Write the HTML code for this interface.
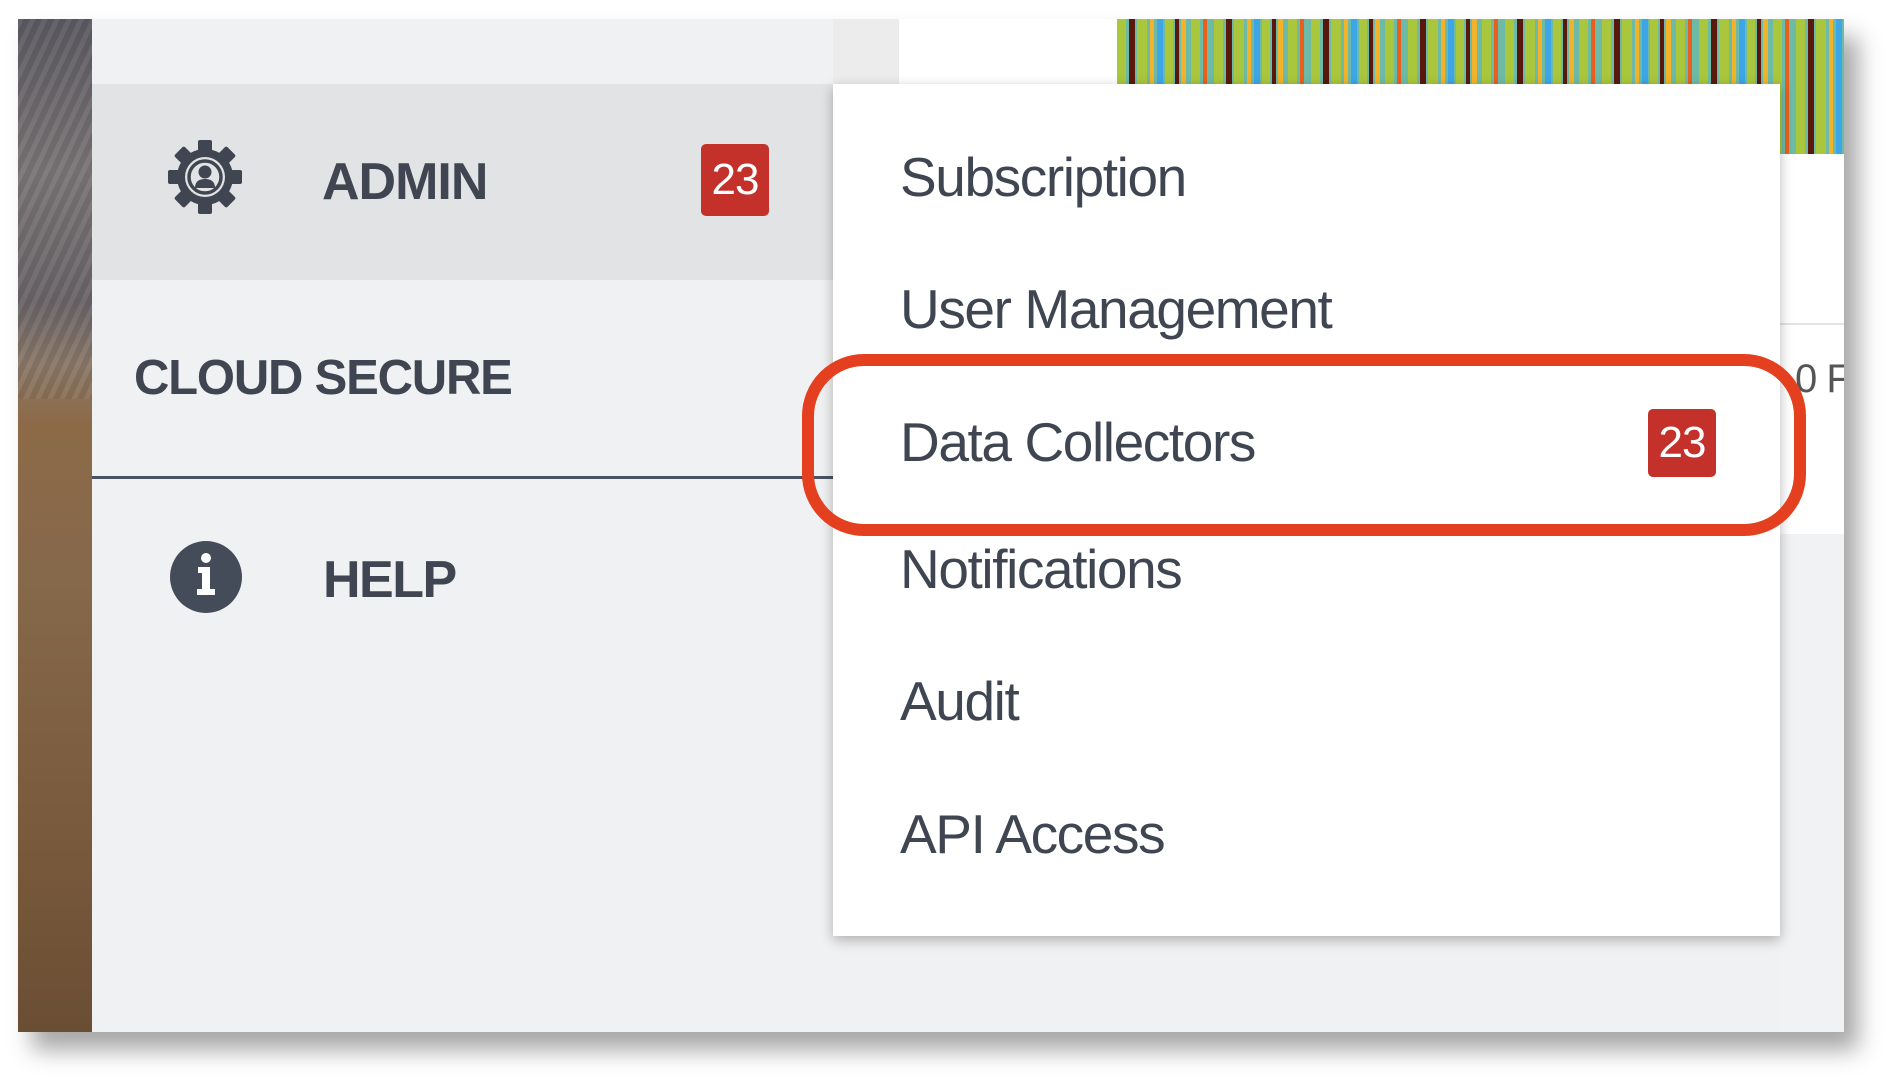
<!DOCTYPE html>
<html><head><meta charset="utf-8"><style>
html,body{margin:0;padding:0;width:1892px;height:1082px;background:#fff;overflow:hidden;position:relative;font-family:"Liberation Sans",sans-serif}
.abs{position:absolute}
#shot{left:18px;top:19px;width:1826px;height:1013px;box-shadow:14px 18px 22px rgba(0,0,0,.35);background:#f0f1f2;overflow:hidden}
.side{color:#3f4652;font-weight:bold;font-size:52px;letter-spacing:-1px;line-height:1;white-space:nowrap}
.mi{color:#3f4652;font-size:55px;letter-spacing:-1.4px;line-height:1;white-space:nowrap}
.badge{background:#c3312a;color:#fff;border-radius:5px;font-size:44px;text-align:center;line-height:72px;letter-spacing:-1px}
</style></head><body>
<div id="shot" class="abs">
  <div class="abs" style="left:0;top:0;width:74px;height:1013px;background:linear-gradient(180deg,#5c5a62 0%,#7a7576 15%,#6a6468 28%,#8a7868 34%,#8c6a48 40%,#86684a 55%,#7a5a3c 80%,#6a4e34 100%)"></div>
  <div class="abs" style="left:0;top:0;width:74px;height:380px;background:repeating-linear-gradient(115deg,rgba(255,255,255,.05) 0 5px,rgba(0,0,0,.06) 5px 11px)"></div>
  <div class="abs" style="left:815px;top:0;width:66px;height:65px;background:#ececed"></div>
  <div class="abs" style="left:881px;top:0;width:945px;height:65px;background:#fff"></div>
  <div class="abs" style="left:1762px;top:65px;width:64px;height:450px;background:#fff"></div>
  <div class="abs" style="left:1762px;top:515px;width:64px;height:498px;background:#f1f2f3"></div>
  <div class="abs" style="left:1762px;top:304px;width:64px;height:2px;background:#e3e4e6"></div>
  <div class="abs" style="left:1777px;top:338px;font-size:40px;color:#555;letter-spacing:-1px;white-space:nowrap">0 F</div>
  <svg class="abs" style="left:1099px;top:0" width="727" height="135">
    <defs>
      <pattern id="p" width="97" height="135" patternUnits="userSpaceOnUse">
        <rect width="97" height="135" fill="#6dbaa6"/>
        <rect x="0" width="9" height="135" fill="#a9c63c"/>
        <rect x="12" width="6" height="135" fill="#5a180c"/>
        <rect x="20" width="10" height="135" fill="#a9c63c"/>
        <rect x="33" width="4" height="135" fill="#f2b32a"/>
        <rect x="40" width="6" height="135" fill="#3fa6e6"/>
        <rect x="48" width="8" height="135" fill="#a9c63c"/>
        <rect x="58" width="4" height="135" fill="#5a180c"/>
        <rect x="64" width="5" height="135" fill="#f2b32a"/>
        <rect x="74" width="9" height="135" fill="#a9c63c"/>
        <rect x="86" width="4" height="135" fill="#e8601e"/>
      </pattern>
    </defs>
    <rect width="727" height="65" fill="url(#p)"/>
    <rect x="663" y="0" width="64" height="135" fill="url(#p)"/>
  </svg>
  <div class="abs" style="left:74px;top:65px;width:741px;height:196px;background:#e2e3e5"></div>
  <svg class="abs" style="left:149px;top:120px" width="76" height="76" viewBox="-38 -38 76 76">
    <g fill="#3f4652">
      <circle r="28"/>
      <g id="t"><rect x="-7" y="-37" width="14" height="14" rx="2"/></g>
      <use href="#t" transform="rotate(45)"/><use href="#t" transform="rotate(90)"/><use href="#t" transform="rotate(135)"/>
      <use href="#t" transform="rotate(180)"/><use href="#t" transform="rotate(225)"/><use href="#t" transform="rotate(270)"/><use href="#t" transform="rotate(315)"/>
    </g>
    <circle r="20" fill="#e2e3e5"/>
    <circle r="16" fill="none" stroke="#3f4652" stroke-width="3.5"/>
    <circle cy="-5" r="6.5" fill="#3f4652"/>
    <path d="M-10 11 Q-10 2 0 2 Q10 2 10 11 Z" fill="#3f4652"/>
  </svg>
  <div class="abs side" style="left:304px;top:137px">ADMIN</div>
  <div class="abs badge" style="left:683px;top:125px;width:68px;height:72px">23</div>
  <div class="abs side" style="left:116px;top:335px;font-size:49px;letter-spacing:-1.2px">CLOUD SECURE</div>
  <div class="abs" style="left:74px;top:457px;width:741px;height:3px;background:#4a5364"></div>
  <svg class="abs" style="left:151px;top:521px" width="74" height="74" viewBox="0 0 74 74">
    <circle cx="37" cy="37" r="36" fill="#454c59"/>
    <circle cx="37" cy="18" r="5" fill="#fff"/>
    <path d="M29 27h12v22h5v6H28v-6h5V33h-4z" fill="#fff"/>
  </svg>
  <div class="abs side" style="left:305px;top:535px;letter-spacing:-1.5px">HELP</div>
  <div class="abs" style="left:815px;top:65px;width:947px;height:852px;background:#fff;box-shadow:0 4px 12px rgba(0,0,0,.28)"></div>
  <div class="abs mi" style="left:882px;top:131px">Subscription</div>
  <div class="abs mi" style="left:882px;top:263px">User Management</div>
  <div class="abs mi" style="left:882px;top:396px">Data Collectors</div>
  <div class="abs badge" style="left:1630px;top:390px;width:68px;height:68px;line-height:68px">23</div>
  <div class="abs mi" style="left:882px;top:523px">Notifications</div>
  <div class="abs mi" style="left:882px;top:655px">Audit</div>
  <div class="abs mi" style="left:882px;top:788px">API Access</div>
  <div class="abs" style="left:784px;top:335px;width:980px;height:158px;border:12px solid #e43f1e;border-radius:62px"></div>
</div>
</body></html>
